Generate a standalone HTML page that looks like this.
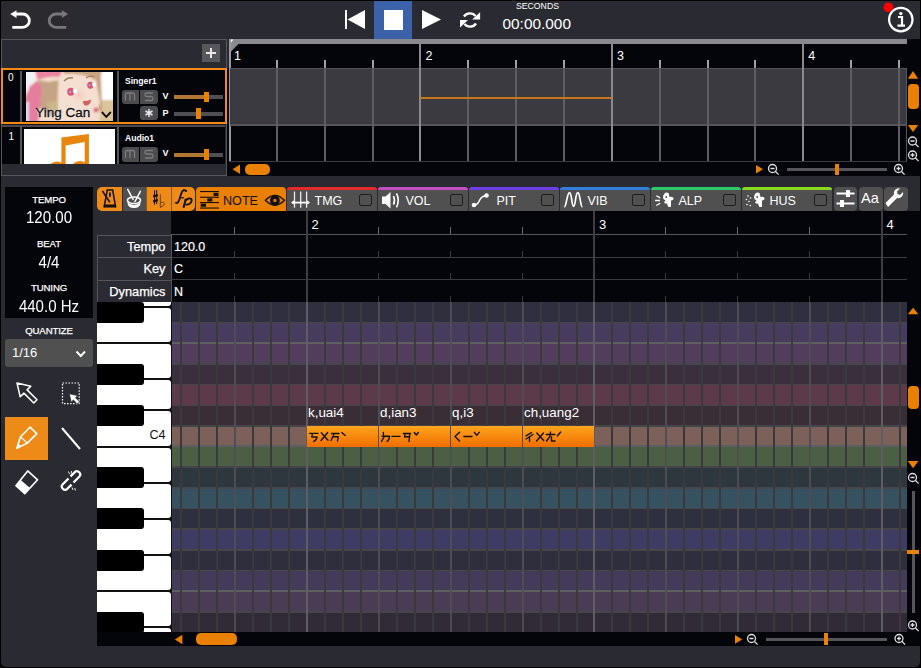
<!DOCTYPE html><html><head><meta charset="utf-8"><style>
html,body{margin:0;padding:0;background:#000;width:921px;height:668px;overflow:hidden}
body{position:relative;font-family:"Liberation Sans",sans-serif}
div{position:absolute;box-sizing:border-box}
.t{white-space:nowrap;line-height:1}
svg{position:absolute;overflow:visible}
</style></head><body>
<div style="left:1px;top:1px;width:919px;height:666px;background:#2a2a32;border-radius:0 0 5px 5px"></div>
<div style="left:1px;top:1px;width:76px;height:38px;background:#2b2b2f;"></div>
<svg style="left:0;top:0" width="100" height="40"><path d="M10.2 14 L16.5 10.3 L16.5 17.9 Z" fill="#fff"/><path d="M15 14 H22.7 A6.65 6.65 0 0 1 22.7 27.3 H12.3" fill="none" stroke="#fff" stroke-width="2.8"/><path d="M68.2 14 L61.9 10.3 L61.9 17.9 Z" fill="#77777c"/><path d="M63.4 14 H55.9 A6.65 6.65 0 0 0 55.9 27.3 H66.2" fill="none" stroke="#77777c" stroke-width="2.8"/></svg>
<div style="left:374px;top:1px;width:38px;height:38px;background:#3b62a8;"></div>
<div style="left:384px;top:10px;width:19px;height:20px;background:#fff;"></div>
<div style="left:345px;top:10px;width:2px;height:19px;background:#fff;"></div>
<svg style="left:0;top:0" width="921" height="40"><path d="M365 10 L347.5 19.5 L365 29 Z" fill="#fff"/><path d="M422 10 L441 19.5 L422 29 Z" fill="#fff"/><g fill="none" stroke="#fff" stroke-width="2.4"><path d="M464 16.5 A7.2 7.2 0 0 1 475.5 16"/><path d="M476 23.5 A7.2 7.2 0 0 1 464.5 24"/></g><path d="M480.1 12.3 L480.1 19.6 L472.2 19.6 Z" fill="#fff"/><path d="M460 27.4 L460 20 L468 20 Z" fill="#fff"/><circle cx="888.4" cy="7.3" r="4.9" fill="#f00"/><circle cx="900.8" cy="19.6" r="11.7" fill="none" stroke="#fff" stroke-width="2.2"/><circle cx="900.8" cy="13.6" r="1.7" fill="#fff"/><path d="M898 17 H902 V25 M897.5 25.6 H905" fill="none" stroke="#fff" stroke-width="2.2"/></svg>
<div class="t" style="left:516px;top:2px;font-size:8.7px;color:#fff;font-weight:normal;">SECONDS</div>
<div class="t" style="left:502.5px;top:15.8px;font-size:15.4px;color:#fff;font-weight:normal;">00:00.000</div>
<div style="left:1px;top:39px;width:226px;height:137px;background:#2a2a32;border:1px solid #55555a"></div>
<div style="left:202px;top:44px;width:18px;height:18px;background:#58585c;"></div>
<div style="left:206px;top:52px;width:10px;height:2px;background:#e8e8e8;"></div>
<div style="left:210px;top:48px;width:2px;height:10px;background:#e8e8e8;"></div>
<div style="left:1px;top:68px;width:226px;height:56px;background:#04040b;border:2px solid #f48a12"></div>
<div class="t" style="left:8px;top:73.3px;font-size:10px;color:#fff;font-weight:normal;">0</div>
<div style="left:20px;top:71px;width:2px;height:51px;background:#55555a;"></div>
<div style="left:117px;top:71px;width:2px;height:51px;background:#55555a;"></div>
<div style="left:26px;top:72px;width:87px;height:49px;overflow:hidden;background:#f4ddcc"><svg width="87" height="49" style="left:0;top:0"><defs><filter id="bl" x="-20%" y="-20%" width="140%" height="140%"><feGaussianBlur stdDeviation="0.9"/></filter><filter id="bl2" x="-50%" y="-50%" width="200%" height="200%"><feGaussianBlur stdDeviation="2"/></filter></defs><g filter="url(#bl)"><rect x="72" y="-2" width="17" height="32" fill="#ffffff"/><rect x="74" y="28" width="15" height="23" fill="#dcc49a"/><path d="M36 -2 H76 L74 10 Q60 6 44 10 Z" fill="#c9a483"/><path d="M68 6 L75 6 L76 40 L70 36 Z" fill="#c6a07e"/><path d="M-2 -2 H9 V20 H-2 Z" fill="#f2f0f4"/><path d="M9 -2 H36 L34 5 Q22 3 12 8 Z" fill="#e8849f"/><path d="M7 12 Q12 6 22 10 L34 8 Q38 20 36 40 L26 44 Q16 40 10 30 Z" fill="#c4a485"/><path d="M4 14 L12 9 L16 16 L12 51 L-2 51 L-2 30 Z" fill="#e47e9c"/><rect x="-2" y="30" width="5" height="21" fill="#e6d6ee"/><path d="M20 30 L38 28 L38 40 L24 40 Z" fill="#cbb58a"/><path d="M33 4 Q50 -2 70 8 L74 30 Q70 49 52 51 L34 51 Q30 30 33 4 Z" fill="#f5dfd0"/></g><circle cx="53" cy="23" r="4" fill="#f7c8c0" filter="url(#bl2)"/><path d="M38 9 Q42 5 47 6" stroke="#a67e5e" stroke-width="1.4" fill="none"/><path d="M60 6 Q64 3 68 5" stroke="#a67e5e" stroke-width="1.2" fill="none"/><ellipse cx="44.8" cy="19.8" rx="3.6" ry="4" fill="#dd5576"/><ellipse cx="49" cy="19" rx="2.2" ry="2.6" fill="#fff"/><circle cx="44" cy="20" r="1.1" fill="#8ec8f8"/><ellipse cx="64.3" cy="13.2" rx="3.1" ry="3.5" fill="#dd5576"/><ellipse cx="68" cy="12.5" rx="1.8" ry="2.3" fill="#fff"/><circle cx="63.5" cy="13.2" r="0.9" fill="#8ec8f8"/><path d="M57 29 Q62 29 65 27.5 Q65 33 60 33.7 Q57 33.5 57 29 Z" fill="#d26262"/><circle cx="70" cy="38" r="2.2" fill="#d85a6a" filter="url(#bl)"/></svg></div>
<div class="t" style="left:35.3px;top:106.3px;font-size:13.5px;color:#111;font-weight:normal;text-shadow:0 0 2px #fff,0 0 1px #fff;-webkit-text-stroke:0.35px #111">Ying Can</div>
<svg style="left:0;top:0" width="230" height="180"><path d="M101.8 112 L106.3 116.8 L110.8 112" fill="none" stroke="#111" stroke-width="1.9"/></svg>
<div class="t" style="left:125px;top:76.5px;font-size:8.6px;color:#fff;font-weight:bold;">Singer1</div>
<div style="left:121.5px;top:89.5px;width:17.5px;height:14.5px;background:#4c4c4e;border-radius:3px 0 0 3px"></div>
<div style="left:140px;top:89.5px;width:18px;height:14.5px;background:#4c4c4e;border-radius:0 3px 3px 0"></div>
<svg style="left:0;top:0" width="230" height="180"><g fill="none" stroke="#7e7e82" stroke-width="1.3"><path d="M125.5 100.5 V94.5 Q125.5 93.0 127.5 93.0 H132.5 Q134.5 93.0 134.5 94.5 V100.5 M130 93.0 V100.5"/><path d="M153 93.0 H146.5 Q145 93.0 145 94.7 Q145 96.5 146.5 96.5 H151.5 Q153 96.5 153 98.5 Q153 100.5 151.5 100.5 H145"/></g></svg>
<div style="left:140px;top:106px;width:18px;height:14px;background:#4c4c4e;border-radius:3px"></div>
<svg style="left:0;top:0" width="230" height="180"><g stroke="#e8e8e8" stroke-width="1.5"><path d="M149 109 V117 M145.5 111 L152.5 115 M145.5 115 L152.5 111"/></g></svg>
<div class="t" style="left:162.5px;top:91.5px;font-size:9px;color:#fff;font-weight:bold;">V</div>
<div class="t" style="left:162.5px;top:108.5px;font-size:9px;color:#fff;font-weight:bold;">P</div>
<div style="left:174px;top:95px;width:49px;height:3.5px;background:#505054;"></div>
<div style="left:174px;top:95px;width:31px;height:3.5px;background:#b07632;"></div>
<div style="left:203.5px;top:92px;width:5px;height:10px;background:#ea8000;"></div>
<div style="left:174px;top:112px;width:49px;height:3.5px;background:#505054;"></div>
<div style="left:196px;top:108px;width:5px;height:10.5px;background:#ea8000;"></div>
<div style="left:2px;top:124px;width:223px;height:1px;background:#15151b;"></div>
<div style="left:2px;top:125px;width:223px;height:2px;background:#4a4a4e;"></div>
<div style="left:2px;top:127px;width:223px;height:37px;background:#04040b;"></div>
<div class="t" style="left:8.5px;top:131.5px;font-size:10px;color:#fff;font-weight:normal;">1</div>
<div style="left:20px;top:126px;width:2px;height:38px;background:#55555a;"></div>
<div style="left:117px;top:126px;width:2px;height:38px;background:#55555a;"></div>
<div style="left:24px;top:129px;width:91px;height:35px;background:#fff;overflow:hidden"><svg width="91" height="35" style="left:0;top:0"><path d="M37.4 8.6 L64.9 5.1 L64.9 36 L60.7 36 L60.7 12.9 L41.6 16.4 L41.6 36 L37.4 36 Z" fill="#e8850f"/><ellipse cx="33" cy="38" rx="7.5" ry="5.5" fill="#e8850f"/><ellipse cx="56" cy="37.5" rx="7.5" ry="5.5" fill="#e8850f"/></svg></div>
<div class="t" style="left:125px;top:133.5px;font-size:8.6px;color:#fff;font-weight:bold;">Audio1</div>
<div style="left:121.5px;top:147px;width:17.5px;height:14.5px;background:#4c4c4e;border-radius:3px 0 0 3px"></div>
<div style="left:140px;top:147px;width:18px;height:14.5px;background:#4c4c4e;border-radius:0 3px 3px 0"></div>
<svg style="left:0;top:0" width="230" height="180"><g fill="none" stroke="#7e7e82" stroke-width="1.3"><path d="M125.5 158 V152 Q125.5 150.5 127.5 150.5 H132.5 Q134.5 150.5 134.5 152 V158 M130 150.5 V158"/><path d="M153 150.5 H146.5 Q145 150.5 145 152.2 Q145 154 146.5 154 H151.5 Q153 154 153 156 Q153 158 151.5 158 H145"/></g></svg>
<div class="t" style="left:162.5px;top:149px;font-size:9px;color:#fff;font-weight:bold;">V</div>
<div style="left:174px;top:153px;width:49px;height:3.5px;background:#505054;"></div>
<div style="left:174px;top:153px;width:31px;height:3.5px;background:#b07632;"></div>
<div style="left:204px;top:149px;width:5px;height:11px;background:#ea8000;"></div>
<div style="left:227px;top:39px;width:693px;height:137px;background:#04040b;"></div>
<div style="left:227px;top:39px;width:2px;height:29px;background:#2a2a32;"></div>
<div style="left:229px;top:39px;width:678px;height:5px;background:#8a8a8e;"></div>
<svg style="left:0;top:0" width="921" height="180"><path d="M229 44 L238.5 44 L230.5 52 L229 52 Z" fill="#8a8a8e"/><path d="M229 39.5 L233.5 39.5 L229 45 Z" fill="#fff"/></svg>
<div style="left:229px;top:39px;width:1.5px;height:123px;background:#9a9a9e;"></div>
<div style="left:230px;top:68px;width:677px;height:56px;background:#3a3a40;"></div>
<div style="left:230px;top:68px;width:677px;height:1px;background:#505056;"></div>
<div style="left:230px;top:124px;width:677px;height:2px;background:#55555a;"></div>
<div class="t" style="left:234.0px;top:49.5px;font-size:12.5px;color:#fff;font-weight:normal;">1</div>
<div style="left:276px;top:60px;width:2px;height:8px;background:#a0a0a4;"></div>
<div style="left:276px;top:69px;width:2px;height:93px;background:#5e5e62;"></div>
<div style="left:324px;top:60px;width:2px;height:8px;background:#a0a0a4;"></div>
<div style="left:324px;top:69px;width:2px;height:93px;background:#5e5e62;"></div>
<div style="left:372px;top:60px;width:2px;height:8px;background:#a0a0a4;"></div>
<div style="left:372px;top:69px;width:2px;height:93px;background:#5e5e62;"></div>
<div style="left:419px;top:44px;width:2px;height:118px;background:#8a8a8e;"></div>
<div class="t" style="left:425.4px;top:49.5px;font-size:12.5px;color:#fff;font-weight:normal;">2</div>
<div style="left:467px;top:60px;width:2px;height:8px;background:#a0a0a4;"></div>
<div style="left:467px;top:69px;width:2px;height:93px;background:#5e5e62;"></div>
<div style="left:515px;top:60px;width:2px;height:8px;background:#a0a0a4;"></div>
<div style="left:515px;top:69px;width:2px;height:93px;background:#5e5e62;"></div>
<div style="left:563px;top:60px;width:2px;height:8px;background:#a0a0a4;"></div>
<div style="left:563px;top:69px;width:2px;height:93px;background:#5e5e62;"></div>
<div style="left:611px;top:44px;width:2px;height:118px;background:#8a8a8e;"></div>
<div class="t" style="left:616.9px;top:49.5px;font-size:12.5px;color:#fff;font-weight:normal;">3</div>
<div style="left:659px;top:60px;width:2px;height:8px;background:#a0a0a4;"></div>
<div style="left:659px;top:69px;width:2px;height:93px;background:#5e5e62;"></div>
<div style="left:707px;top:60px;width:2px;height:8px;background:#a0a0a4;"></div>
<div style="left:707px;top:69px;width:2px;height:93px;background:#5e5e62;"></div>
<div style="left:754px;top:60px;width:2px;height:8px;background:#a0a0a4;"></div>
<div style="left:754px;top:69px;width:2px;height:93px;background:#5e5e62;"></div>
<div style="left:802px;top:44px;width:2px;height:118px;background:#8a8a8e;"></div>
<div class="t" style="left:808.3px;top:49.5px;font-size:12.5px;color:#fff;font-weight:normal;">4</div>
<div style="left:850px;top:60px;width:2px;height:8px;background:#a0a0a4;"></div>
<div style="left:850px;top:69px;width:2px;height:93px;background:#5e5e62;"></div>
<div style="left:898px;top:60px;width:2px;height:8px;background:#a0a0a4;"></div>
<div style="left:898px;top:69px;width:2px;height:93px;background:#5e5e62;"></div>
<div style="left:420px;top:97px;width:191px;height:1.5px;background:#c8761a;"></div>
<div style="left:906px;top:68px;width:1px;height:94px;background:#55555a;"></div>
<div style="left:227px;top:162px;width:693px;height:14px;background:#04040b;"></div>
<div style="left:229px;top:161px;width:678px;height:1px;background:#3a3a40;"></div>
<svg style="left:0;top:0" width="921" height="180"><path d="M240 164.5 L232.5 169.3 L240 174 Z" fill="#ea8000"/><path d="M756 165 L763 169.2 L756 173.4 Z" fill="#ea8000"/><path d="M918.2 78.7 L913 71 L907.8 78.7 Z" fill="#ea8000"/><path d="M907.8 125 L913 132 L918.2 125 Z" fill="#ea8000"/><g fill="none" stroke="#e0e0e0" stroke-width="1.3"><circle cx="772.5" cy="168.5" r="4"/><path d="M775.3 171.3 L778.6 174.6 M770.5 168.5 H774.5"/><circle cx="898.5" cy="168.5" r="4"/><path d="M901.3 171.3 L904.6 174.6 M896.5 168.5 H900.5 M898.5 166.5 V170.5"/><circle cx="912.5" cy="141" r="4"/><path d="M915.3 143.8 L918.6 147.1 M910.5 141 H914.5"/><circle cx="912.5" cy="155" r="4"/><path d="M915.3 157.8 L918.6 161.1 M910.5 155 H914.5 M912.5 153 V157"/></g></svg>
<div style="left:245px;top:163.5px;width:25px;height:11px;background:#ea8000;border-radius:5px"></div>
<div style="left:907.5px;top:84px;width:11px;height:25px;background:#ea8000;border-radius:4px"></div>
<div style="left:787px;top:168px;width:100px;height:3px;background:#55555a;"></div>
<div style="left:835px;top:163.5px;width:4px;height:11px;background:#ea8000;"></div>
<div style="left:5px;top:186.5px;width:88px;height:131.5px;background:#04040b;"></div>
<div class="t" style="left:0px;top:194.5px;font-size:9.6px;color:#fff;font-weight:normal;width:98px;text-align:center;-webkit-text-stroke:0.25px #fff;letter-spacing:-0.1px">TEMPO</div>
<div class="t" style="left:0px;top:210px;font-size:16px;color:#fff;font-weight:normal;width:98px;text-align:center;transform:scaleX(0.94)">120.00</div>
<div class="t" style="left:0px;top:238.6px;font-size:9.6px;color:#fff;font-weight:normal;width:98px;text-align:center;-webkit-text-stroke:0.25px #fff;letter-spacing:-0.1px">BEAT</div>
<div class="t" style="left:0px;top:254.5px;font-size:16px;color:#fff;font-weight:normal;width:98px;text-align:center;transform:scaleX(0.94)">4/4</div>
<div class="t" style="left:0px;top:282.7px;font-size:9.6px;color:#fff;font-weight:normal;width:98px;text-align:center;-webkit-text-stroke:0.25px #fff;letter-spacing:-0.1px">TUNING</div>
<div class="t" style="left:0px;top:298.5px;font-size:16px;color:#fff;font-weight:normal;width:98px;text-align:center;transform:scaleX(0.94)">440.0 Hz</div>
<div class="t" style="left:0px;top:326px;font-size:9.6px;color:#fff;font-weight:normal;width:98px;text-align:center;-webkit-text-stroke:0.25px #fff;letter-spacing:-0.1px">QUANTIZE</div>
<div style="left:5px;top:339px;width:88px;height:28px;background:#505050;border-radius:3px"></div>
<div class="t" style="left:12px;top:346px;font-size:13px;color:#fff;font-weight:normal;">1/16</div>
<svg style="left:0;top:0" width="100" height="520"><path d="M76.5 351.5 L80.8 356 L85 351.5" fill="none" stroke="#fff" stroke-width="1.9"/></svg>
<div style="left:5px;top:416.5px;width:43px;height:43px;background:#ee8a18;"></div>
<svg style="left:0;top:0" width="100" height="520"><g fill="none" stroke="#fff" stroke-width="1.5" stroke-linejoin="round"><path d="M17 383 L30.8 386.2 L27.1 389.9 L37 399.8 L33.8 403 L23.9 393.1 L20.2 396.8 Z"/><rect x="62.5" y="383" width="16.7" height="20.6" stroke-dasharray="1.5 1.5" stroke-width="1.2"/><path d="M62 428 L80 449" stroke-width="2"/></g><path d="M69.3 393.8 L77.8 395.6 L75.6 397.8 L79.6 401.8 L77.4 404 L73.4 400 L71.2 402.2 Z" fill="#fff" stroke="#2a2a32" stroke-width="0.8"/><path d="M30 427.2 L36.8 433.6 L27.3 443.1 L16.8 448.3 L20.5 436.7 Z" fill="none" stroke="#fff" stroke-width="1.6" stroke-linejoin="round"/><path d="M20.5 436.7 L27.3 443.1" stroke="#fff" stroke-width="1.3"/><path d="M16.8 448.3 L18.3 443.5 L21.6 446.6 Z" fill="#fff"/><path d="M27.7 470.9 L37.6 479.8 L24.8 493.6 L15.9 485.7 Z" fill="none" stroke="#fff" stroke-width="1.6" stroke-linejoin="round"/><path d="M15.9 485.7 L21 480.2 L30 488 L24.8 493.6 Z" fill="#fff"/><g fill="none" stroke="#fff" stroke-width="2.3"><path d="M68.5 478.5 L62.8 484.2 Q60.5 486.5 62.8 488.8 Q65 491 67.3 488.8 L71.5 484.6"/><path d="M73.5 482.5 L79.2 476.8 Q81.5 474.5 79.2 472.2 Q77 470 74.7 472.2 L70.5 476.4"/></g><g stroke="#fff" stroke-width="0.9"><path d="M68.5 471.5 L69.5 474 M71.5 471 L71.3 473.5 M73 490 L72 487.5 M75.5 490.5 L74.7 488"/></g></svg>
<div style="left:97px;top:186.5px;width:24.5px;height:24.5px;background:#ee8a18;border-radius:5px 0 0 5px"></div>
<div style="left:123px;top:186.5px;width:22.7px;height:24.5px;background:#505050;"></div>
<div style="left:147px;top:186.5px;width:23.8px;height:24.5px;background:#ee8a18;"></div>
<div style="left:172px;top:186.5px;width:23px;height:24.5px;background:#ee8a18;border-radius:0 5px 5px 0"></div>
<div style="left:196px;top:186.5px;width:90px;height:24.5px;background:#ea8000;border-radius:4px 4px 0 0"></div>
<div style="left:287px;top:186.5px;width:89.7px;height:24.5px;background:#505050;border-radius:4px 4px 0 0"></div>
<div style="left:287px;top:186.5px;width:89.7px;height:3.3px;background:#e42a2a;border-radius:4px 4px 0 0"></div>
<div class="t" style="left:314.5px;top:195px;font-size:12.5px;color:#fff;font-weight:normal;">TMG</div>
<div style="left:359.3px;top:193.7px;width:12.4px;height:12.2px;background:#505050;border:1.7px solid #1e1e1e;border-radius:2px"></div>
<div style="left:378px;top:186.5px;width:89.7px;height:24.5px;background:#505050;border-radius:4px 4px 0 0"></div>
<div style="left:378px;top:186.5px;width:89.7px;height:3.3px;background:#c44cc4;border-radius:4px 4px 0 0"></div>
<div class="t" style="left:405.5px;top:195px;font-size:12.5px;color:#fff;font-weight:normal;">VOL</div>
<div style="left:450.3px;top:193.7px;width:12.4px;height:12.2px;background:#505050;border:1.7px solid #1e1e1e;border-radius:2px"></div>
<div style="left:469px;top:186.5px;width:89.7px;height:24.5px;background:#505050;border-radius:4px 4px 0 0"></div>
<div style="left:469px;top:186.5px;width:89.7px;height:3.3px;background:#6d3de6;border-radius:4px 4px 0 0"></div>
<div class="t" style="left:496.5px;top:195px;font-size:12.5px;color:#fff;font-weight:normal;">PIT</div>
<div style="left:541.3px;top:193.7px;width:12.4px;height:12.2px;background:#505050;border:1.7px solid #1e1e1e;border-radius:2px"></div>
<div style="left:560px;top:186.5px;width:89.7px;height:24.5px;background:#505050;border-radius:4px 4px 0 0"></div>
<div style="left:560px;top:186.5px;width:89.7px;height:3.3px;background:#2f80da;border-radius:4px 4px 0 0"></div>
<div class="t" style="left:587.5px;top:195px;font-size:12.5px;color:#fff;font-weight:normal;">VIB</div>
<div style="left:632.3px;top:193.7px;width:12.4px;height:12.2px;background:#505050;border:1.7px solid #1e1e1e;border-radius:2px"></div>
<div style="left:651px;top:186.5px;width:89.7px;height:24.5px;background:#505050;border-radius:4px 4px 0 0"></div>
<div style="left:651px;top:186.5px;width:89.7px;height:3.3px;background:#2dc86c;border-radius:4px 4px 0 0"></div>
<div class="t" style="left:678.5px;top:195px;font-size:12.5px;color:#fff;font-weight:normal;">ALP</div>
<div style="left:723.3px;top:193.7px;width:12.4px;height:12.2px;background:#505050;border:1.7px solid #1e1e1e;border-radius:2px"></div>
<div style="left:742px;top:186.5px;width:89.7px;height:24.5px;background:#505050;border-radius:4px 4px 0 0"></div>
<div style="left:742px;top:186.5px;width:89.7px;height:3.3px;background:#8ad81e;border-radius:4px 4px 0 0"></div>
<div class="t" style="left:769.5px;top:195px;font-size:12.5px;color:#fff;font-weight:normal;">HUS</div>
<div style="left:814.3px;top:193.7px;width:12.4px;height:12.2px;background:#505050;border:1.7px solid #1e1e1e;border-radius:2px"></div>
<div style="left:833.5px;top:186.5px;width:23.5px;height:24px;background:#505050;border-radius:4px"></div>
<div style="left:859px;top:186.5px;width:23.5px;height:24px;background:#505050;border-radius:4px"></div>
<div style="left:884px;top:186.5px;width:23.5px;height:24px;background:#505050;border-radius:4px"></div>
<div class="t" style="left:223px;top:194.8px;font-size:12.6px;color:#111;font-weight:normal;">NOTE</div>
<div class="t" style="left:861px;top:190.8px;font-size:14.6px;color:#fff;font-weight:normal;">Aa</div>
<svg style="left:0;top:0" width="921" height="240"><path d="M104 207.5 L107.3 190 L112.7 190 L115.7 207.5" fill="none" stroke="#111" stroke-width="1.5"/><path d="M104.5 204.5 H115.5 V207.5 H104 Z" fill="#111"/><path d="M102.4 190.9 L109.8 202.3" stroke="#111" stroke-width="1.6"/><rect x="109" y="192.5" width="1.8" height="4.4" fill="#111"/><ellipse cx="134" cy="200.3" rx="6.6" ry="3.2" fill="none" stroke="#fff" stroke-width="1.5"/><path d="M127.4 202 Q127.5 208 134 208 Q140.5 208 140.6 202 Q138 205 134 205 Q130 205 127.4 202 Z" fill="#fff"/><path d="M127.7 189.3 L133.1 199.3 M140.4 191.4 L135 201.5" stroke="#fff" stroke-width="1.5" stroke-linecap="round"/><g fill="#111"><rect x="200" y="191" width="19" height="1.1"/><rect x="200" y="196.7" width="19" height="1.1"/><rect x="200" y="202" width="19" height="1.1"/><rect x="200" y="207.5" width="19" height="1.1"/><rect x="213.5" y="192.8" width="5" height="3.2"/><rect x="207.3" y="198.3" width="5" height="3.2"/><rect x="200.7" y="203.6" width="5.3" height="3.2"/></g><path d="M265.4 200.3 Q275 190.5 284.4 200.3 Q275 210.1 265.4 200.3 Z" fill="none" stroke="#111" stroke-width="1.4"/><circle cx="274.9" cy="200.5" r="3.3" fill="none" stroke="#111" stroke-width="3.2"/><g stroke="#e8e8e8" stroke-width="1.3"><path d="M294.5 191.5 V207.8 M300.7 191.5 V207.8 M306.6 191.5 V207.8"/></g><path d="M292 202.6 H309" stroke="#fff" stroke-width="1.8"/><path d="M291 202.6 L294 200.6 V204.6 Z M310 202.6 L307 200.6 V204.6 Z" fill="#fff"/><path d="M382 196.5 H385.5 L390.5 192 V208.5 L385.5 204 H382 Z" fill="#fff"/><path d="M393.5 196 Q395.5 200.3 393.5 204.6 M396.5 193.3 Q400 200.3 396.5 207.3" fill="none" stroke="#fff" stroke-width="1.6"/><path d="M474.5 205 Q477.5 205 479.5 200.5 Q481.5 196 485.5 196" fill="none" stroke="#fff" stroke-width="1.5"/><circle cx="474" cy="205" r="2.3" fill="#fff"/><circle cx="486.5" cy="195.5" r="2.3" fill="#fff"/><path d="M564.3 206.8 C566.5 206.8 567 192.6 569.5 192.6 C572 192.6 571.5 206.4 573.6 206.4 C575.7 206.4 575.3 192.6 577.8 192.6 C580.3 192.6 580.2 206.8 582.4 206.8" fill="none" stroke="#fff" stroke-width="1.7"/><path d="M656.3 195.7 L660.2 197.9 M655.1 200.5 H660 M656.3 205.5 L660.2 203.3" stroke="#fff" stroke-width="1.3"/><path transform="translate(0,0)" d="M664.5 193.5 Q666 191.8 668.5 193 L669.5 197 Q672 196 673.5 198 Q673.8 200.3 671 200.5 L671 206.5 Q669.5 207.5 668 206.5 L667 203.5 Q665 204 664 202.5 L665.5 200.5 Q663 199.5 663 197.5 Q663 195 664.5 193.5 Z" fill="#fff"/><circle cx="666.2" cy="197" r="0.9" fill="#505050"/><g fill="#fff"><circle cx="748" cy="196" r="0.8"/><circle cx="746.5" cy="199.5" r="0.8"/><circle cx="749" cy="201.5" r="0.8"/><circle cx="747" cy="204.5" r="0.8"/><circle cx="750.5" cy="198" r="0.8"/><circle cx="750.3" cy="205.5" r="0.8"/></g><path transform="translate(91,0)" d="M664.5 193.5 Q666 191.8 668.5 193 L669.5 197 Q672 196 673.5 198 Q673.8 200.3 671 200.5 L671 206.5 Q669.5 207.5 668 206.5 L667 203.5 Q665 204 664 202.5 L665.5 200.5 Q663 199.5 663 197.5 Q663 195 664.5 193.5 Z" fill="#fff"/><circle cx="757.2" cy="197" r="0.9" fill="#505050"/><g stroke="#fff" stroke-width="2"><path d="M836.5 193.5 H854.5 M836.5 203.5 H854.5"/></g><rect x="846" y="190" width="4" height="7" fill="#fff"/><rect x="840" y="200" width="4" height="7" fill="#fff"/><path d="M888 207 L897 198 A5 5 0 0 0 903 192 L900 195 L897.5 194 L897 191.5 L900 188.5 A5 5 0 0 0 894 194.5 L885.5 203 Z" fill="#fff"/></svg>
<svg style="left:0;top:0" width="921" height="240"><g stroke="#111" fill="none"><path d="M154.5 190.3 V204.7 M156.7 190 V204" stroke-width="1"/><path d="M153.1 196.5 L157.9 195 M153.1 201.5 L157.9 200" stroke-width="2"/><path d="M160.3 194.2 V207.5 Q164.8 205.5 164.6 203.3 Q164.3 201.5 160.3 202.5" stroke-width="0.9" stroke="#5a3a10"/><path d="M186.3 191.3 Q185.5 189.7 183.8 190.2 Q181.8 191 180.5 196 Q179 201.5 177.5 202.8 Q176 203.6 175.5 202.3" stroke-width="1.8"/><path d="M179 197.8 H184" stroke-width="1.1"/><path d="M185.8 198.7 L183.5 207.8" stroke-width="2"/><path d="M185.6 200.5 Q188.5 197.5 191 198.7 Q192.5 200 190.8 202.8 Q189 205.2 185.4 204.3" stroke-width="1.8"/></g><circle cx="186" cy="191" r="1.1" fill="#111"/></svg>
<div style="left:170.5px;top:186.5px;width:1px;height:24.5px;background:#8a5a1c;"></div>
<div style="left:146px;top:186.5px;width:1px;height:24.5px;background:#8a5a1c;"></div>
<div style="left:171px;top:211px;width:736px;height:91.5px;background:#04040b;"></div>
<div style="left:171px;top:233.5px;width:736px;height:1px;background:#55555a;"></div>
<div style="left:97px;top:234.5px;width:74.5px;height:23.5px;background:#2a2a32;border:1px solid #55555a"></div>
<div style="left:171px;top:256.7px;width:736px;height:1px;background:#3c3c40;"></div>
<div class="t" style="left:96.5px;top:240.7px;font-size:12.8px;color:#fff;font-weight:normal;width:69px;text-align:right;-webkit-text-stroke:0.25px #fff">Tempo</div>
<div class="t" style="left:174px;top:240.7px;font-size:12.5px;color:#fff;font-weight:normal;-webkit-text-stroke:0.2px #fff">120.0</div>
<div style="left:97px;top:257.2px;width:74.5px;height:23.5px;background:#2a2a32;border:1px solid #55555a"></div>
<div style="left:171px;top:279.4px;width:736px;height:1px;background:#3c3c40;"></div>
<div class="t" style="left:96.5px;top:263.4px;font-size:12.8px;color:#fff;font-weight:normal;width:69px;text-align:right;-webkit-text-stroke:0.25px #fff">Key</div>
<div class="t" style="left:174px;top:263.4px;font-size:12.5px;color:#fff;font-weight:normal;-webkit-text-stroke:0.2px #fff">C</div>
<div style="left:97px;top:279.9px;width:74.5px;height:23.5px;background:#2a2a32;border:1px solid #55555a"></div>
<div style="left:171px;top:302.1px;width:736px;height:1px;background:#3c3c40;"></div>
<div class="t" style="left:96.5px;top:286.09999999999997px;font-size:12.8px;color:#fff;font-weight:normal;width:69px;text-align:right;-webkit-text-stroke:0.25px #fff">Dynamics</div>
<div class="t" style="left:174px;top:286.09999999999997px;font-size:12.5px;color:#fff;font-weight:normal;-webkit-text-stroke:0.2px #fff">N</div>
<div style="left:171.3px;top:301.7px;width:735.7px;height:21.16px;background:#302f40;"></div>
<div style="left:171.3px;top:322.36px;width:735.7px;height:21.16px;background:#483c5e;"></div>
<div style="left:171.3px;top:321.86px;width:735.7px;height:1.5px;background:#45454a;"></div>
<div style="left:171.3px;top:343.02px;width:735.7px;height:21.16px;background:#523e5c;"></div>
<div style="left:171.3px;top:342.02px;width:735.7px;height:2px;background:#5f5f62;"></div>
<div style="left:171.3px;top:363.68px;width:735.7px;height:21.16px;background:#3a303d;"></div>
<div style="left:171.3px;top:363.18px;width:735.7px;height:1.5px;background:#45454a;"></div>
<div style="left:171.3px;top:384.34px;width:735.7px;height:21.16px;background:#5c3a4a;"></div>
<div style="left:171.3px;top:383.84px;width:735.7px;height:1.5px;background:#45454a;"></div>
<div style="left:171.3px;top:405.0px;width:735.7px;height:21.16px;background:#3a2e36;"></div>
<div style="left:171.3px;top:404.5px;width:735.7px;height:1.5px;background:#45454a;"></div>
<div style="left:171.3px;top:425.66px;width:735.7px;height:21.16px;background:#7c605a;"></div>
<div style="left:171.3px;top:425.16px;width:735.7px;height:1.5px;background:#45454a;"></div>
<div style="left:171.3px;top:446.32px;width:735.7px;height:21.16px;background:#4c5e44;"></div>
<div style="left:171.3px;top:445.32px;width:735.7px;height:2px;background:#5f5f62;"></div>
<div style="left:171.3px;top:466.98px;width:735.7px;height:21.16px;background:#2e363e;"></div>
<div style="left:171.3px;top:466.48px;width:735.7px;height:1.5px;background:#45454a;"></div>
<div style="left:171.3px;top:487.64px;width:735.7px;height:21.16px;background:#365260;"></div>
<div style="left:171.3px;top:487.14px;width:735.7px;height:1.5px;background:#45454a;"></div>
<div style="left:171.3px;top:508.3px;width:735.7px;height:21.16px;background:#2e3040;"></div>
<div style="left:171.3px;top:507.8px;width:735.7px;height:1.5px;background:#45454a;"></div>
<div style="left:171.3px;top:528.96px;width:735.7px;height:21.16px;background:#3e3c62;"></div>
<div style="left:171.3px;top:528.46px;width:735.7px;height:1.5px;background:#45454a;"></div>
<div style="left:171.3px;top:549.62px;width:735.7px;height:21.16px;background:#2e2e3c;"></div>
<div style="left:171.3px;top:549.12px;width:735.7px;height:1.5px;background:#45454a;"></div>
<div style="left:171.3px;top:570.28px;width:735.7px;height:21.16px;background:#443a5a;"></div>
<div style="left:171.3px;top:569.78px;width:735.7px;height:1.5px;background:#45454a;"></div>
<div style="left:171.3px;top:590.94px;width:735.7px;height:21.16px;background:#4a3c54;"></div>
<div style="left:171.3px;top:589.94px;width:735.7px;height:2px;background:#5f5f62;"></div>
<div style="left:171.3px;top:611.6px;width:735.7px;height:21.16px;background:#312b37;"></div>
<div style="left:171.3px;top:611.1px;width:735.7px;height:1.5px;background:#45454a;"></div>
<div style="left:180px;top:302px;width:2px;height:330px;background:#3a3a3c;"></div>
<div style="left:198px;top:302px;width:2px;height:330px;background:#3a3a3c;"></div>
<div style="left:216px;top:302px;width:2px;height:330px;background:#3a3a3c;"></div>
<div style="left:234px;top:302px;width:2px;height:330px;background:rgba(78,78,82,0.95);"></div>
<div style="left:234px;top:227px;width:1px;height:7px;background:#6a6a6e;"></div>
<div style="left:234px;top:250.5px;width:1px;height:6px;background:rgba(110,110,110,0.5);"></div>
<div style="left:234px;top:273.2px;width:1px;height:6px;background:rgba(110,110,110,0.5);"></div>
<div style="left:234px;top:295.9px;width:1px;height:6px;background:rgba(110,110,110,0.5);"></div>
<div style="left:252px;top:302px;width:2px;height:330px;background:#3a3a3c;"></div>
<div style="left:270px;top:302px;width:2px;height:330px;background:#3a3a3c;"></div>
<div style="left:288px;top:302px;width:2px;height:330px;background:#3a3a3c;"></div>
<div style="left:306px;top:211px;width:2px;height:91px;background:#3e3e42;"></div>
<div style="left:306px;top:302px;width:2px;height:330px;background:#5e5e62;"></div>
<div style="left:324px;top:302px;width:2px;height:330px;background:#3a3a3c;"></div>
<div style="left:342px;top:302px;width:2px;height:330px;background:#3a3a3c;"></div>
<div style="left:360px;top:302px;width:2px;height:330px;background:#3a3a3c;"></div>
<div style="left:378px;top:302px;width:2px;height:330px;background:rgba(78,78,82,0.95);"></div>
<div style="left:378px;top:227px;width:1px;height:7px;background:#6a6a6e;"></div>
<div style="left:378px;top:250.5px;width:1px;height:6px;background:rgba(110,110,110,0.5);"></div>
<div style="left:378px;top:273.2px;width:1px;height:6px;background:rgba(110,110,110,0.5);"></div>
<div style="left:378px;top:295.9px;width:1px;height:6px;background:rgba(110,110,110,0.5);"></div>
<div style="left:396px;top:302px;width:2px;height:330px;background:#3a3a3c;"></div>
<div style="left:414px;top:302px;width:2px;height:330px;background:#3a3a3c;"></div>
<div style="left:432px;top:302px;width:2px;height:330px;background:#3a3a3c;"></div>
<div style="left:450px;top:302px;width:2px;height:330px;background:rgba(78,78,82,0.95);"></div>
<div style="left:450px;top:227px;width:1px;height:7px;background:#6a6a6e;"></div>
<div style="left:450px;top:250.5px;width:1px;height:6px;background:rgba(110,110,110,0.5);"></div>
<div style="left:450px;top:273.2px;width:1px;height:6px;background:rgba(110,110,110,0.5);"></div>
<div style="left:450px;top:295.9px;width:1px;height:6px;background:rgba(110,110,110,0.5);"></div>
<div style="left:468px;top:302px;width:2px;height:330px;background:#3a3a3c;"></div>
<div style="left:486px;top:302px;width:2px;height:330px;background:#3a3a3c;"></div>
<div style="left:504px;top:302px;width:2px;height:330px;background:#3a3a3c;"></div>
<div style="left:522px;top:302px;width:2px;height:330px;background:rgba(78,78,82,0.95);"></div>
<div style="left:522px;top:227px;width:1px;height:7px;background:#6a6a6e;"></div>
<div style="left:522px;top:250.5px;width:1px;height:6px;background:rgba(110,110,110,0.5);"></div>
<div style="left:522px;top:273.2px;width:1px;height:6px;background:rgba(110,110,110,0.5);"></div>
<div style="left:522px;top:295.9px;width:1px;height:6px;background:rgba(110,110,110,0.5);"></div>
<div style="left:540px;top:302px;width:2px;height:330px;background:#3a3a3c;"></div>
<div style="left:558px;top:302px;width:2px;height:330px;background:#3a3a3c;"></div>
<div style="left:576px;top:302px;width:2px;height:330px;background:#3a3a3c;"></div>
<div style="left:593px;top:211px;width:2px;height:91px;background:#3e3e42;"></div>
<div style="left:593px;top:302px;width:2px;height:330px;background:#5e5e62;"></div>
<div style="left:611px;top:302px;width:2px;height:330px;background:#3a3a3c;"></div>
<div style="left:629px;top:302px;width:2px;height:330px;background:#3a3a3c;"></div>
<div style="left:647px;top:302px;width:2px;height:330px;background:#3a3a3c;"></div>
<div style="left:665px;top:302px;width:2px;height:330px;background:rgba(78,78,82,0.95);"></div>
<div style="left:665px;top:227px;width:1px;height:7px;background:#6a6a6e;"></div>
<div style="left:665px;top:250.5px;width:1px;height:6px;background:rgba(110,110,110,0.5);"></div>
<div style="left:665px;top:273.2px;width:1px;height:6px;background:rgba(110,110,110,0.5);"></div>
<div style="left:665px;top:295.9px;width:1px;height:6px;background:rgba(110,110,110,0.5);"></div>
<div style="left:683px;top:302px;width:2px;height:330px;background:#3a3a3c;"></div>
<div style="left:701px;top:302px;width:2px;height:330px;background:#3a3a3c;"></div>
<div style="left:719px;top:302px;width:2px;height:330px;background:#3a3a3c;"></div>
<div style="left:737px;top:302px;width:2px;height:330px;background:rgba(78,78,82,0.95);"></div>
<div style="left:737px;top:227px;width:1px;height:7px;background:#6a6a6e;"></div>
<div style="left:737px;top:250.5px;width:1px;height:6px;background:rgba(110,110,110,0.5);"></div>
<div style="left:737px;top:273.2px;width:1px;height:6px;background:rgba(110,110,110,0.5);"></div>
<div style="left:737px;top:295.9px;width:1px;height:6px;background:rgba(110,110,110,0.5);"></div>
<div style="left:755px;top:302px;width:2px;height:330px;background:#3a3a3c;"></div>
<div style="left:773px;top:302px;width:2px;height:330px;background:#3a3a3c;"></div>
<div style="left:791px;top:302px;width:2px;height:330px;background:#3a3a3c;"></div>
<div style="left:809px;top:302px;width:2px;height:330px;background:rgba(78,78,82,0.95);"></div>
<div style="left:809px;top:227px;width:1px;height:7px;background:#6a6a6e;"></div>
<div style="left:809px;top:250.5px;width:1px;height:6px;background:rgba(110,110,110,0.5);"></div>
<div style="left:809px;top:273.2px;width:1px;height:6px;background:rgba(110,110,110,0.5);"></div>
<div style="left:809px;top:295.9px;width:1px;height:6px;background:rgba(110,110,110,0.5);"></div>
<div style="left:827px;top:302px;width:2px;height:330px;background:#3a3a3c;"></div>
<div style="left:845px;top:302px;width:2px;height:330px;background:#3a3a3c;"></div>
<div style="left:863px;top:302px;width:2px;height:330px;background:#3a3a3c;"></div>
<div style="left:881px;top:211px;width:2px;height:91px;background:#3e3e42;"></div>
<div style="left:881px;top:302px;width:2px;height:330px;background:#5e5e62;"></div>
<div style="left:899px;top:302px;width:2px;height:330px;background:#3a3a3c;"></div>
<div class="t" style="left:311.6px;top:218px;font-size:13px;color:#fff;font-weight:normal;">2</div>
<div class="t" style="left:599.0px;top:218px;font-size:13px;color:#fff;font-weight:normal;">3</div>
<div class="t" style="left:886.4px;top:218px;font-size:13px;color:#fff;font-weight:normal;">4</div>
<div style="left:96.5px;top:302px;width:75px;height:330px;overflow:hidden;background:#111">
<div style="left:0;top:109.47px;width:74.8px;height:34.16px;background:#fff;border-radius:0 3px 3px 0"></div>
<div style="left:0;top:78.47px;width:74.8px;height:28.99px;background:#fff;border-radius:0 3px 3px 0"></div>
<div style="left:0;top:42.32px;width:74.8px;height:34.15px;background:#fff;border-radius:0 3px 3px 0"></div>
<div style="left:0;top:6.17px;width:74.8px;height:34.16px;background:#fff;border-radius:0 3px 3px 0"></div>
<div style="left:0;top:-29.99px;width:74.8px;height:34.16px;background:#fff;border-radius:0 3px 3px 0"></div>
<div style="left:0;top:-66.14px;width:74.8px;height:34.15px;background:#fff;border-radius:0 3px 3px 0"></div>
<div style="left:0;top:-102.30px;width:74.8px;height:34.16px;background:#fff;border-radius:0 3px 3px 0"></div>
<div style="left:0;top:145.62px;width:74.8px;height:34.16px;background:#fff;border-radius:0 3px 3px 0"></div>
<div style="left:0;top:181.78px;width:74.8px;height:34.16px;background:#fff;border-radius:0 3px 3px 0"></div>
<div style="left:0;top:217.93px;width:74.8px;height:34.16px;background:#fff;border-radius:0 3px 3px 0"></div>
<div style="left:0;top:254.09px;width:74.8px;height:34.16px;background:#fff;border-radius:0 3px 3px 0"></div>
<div style="left:0;top:290.24px;width:74.8px;height:34.15px;background:#fff;border-radius:0 3px 3px 0"></div>
<div style="left:0;top:326.39px;width:74.8px;height:28.99px;background:#fff;border-radius:0 3px 3px 0"></div>
<div style="left:0;top:357.38px;width:74.8px;height:34.16px;background:#fff;border-radius:0 3px 3px 0"></div>
<div style="left:0;top:-0.30px;width:47.4px;height:20.96px;background:#000;border-radius:0 3px 3px 0"></div>
<div style="left:0;top:61.68px;width:47.4px;height:20.96px;background:#000;border-radius:0 3px 3px 0"></div>
<div style="left:0;top:103.00px;width:47.4px;height:20.96px;background:#000;border-radius:0 3px 3px 0"></div>
<div style="left:0;top:164.98px;width:47.4px;height:20.96px;background:#000;border-radius:0 3px 3px 0"></div>
<div style="left:0;top:206.30px;width:47.4px;height:20.96px;background:#000;border-radius:0 3px 3px 0"></div>
<div style="left:0;top:247.62px;width:47.4px;height:20.96px;background:#000;border-radius:0 3px 3px 0"></div>
<div style="left:0;top:309.60px;width:47.4px;height:20.96px;background:#000;border-radius:0 3px 3px 0"></div>
</div>
<div class="t" style="left:149.5px;top:429px;font-size:12.6px;color:#111;font-weight:normal;">C4</div>
<div style="left:307px;top:426px;width:71px;height:20.5px;background:linear-gradient(#ffa41c,#f06e00);"></div>
<div class="t" style="left:308px;top:406px;font-size:13.4px;color:#fff;font-weight:normal;">k,uai4</div>
<div style="left:379px;top:426px;width:71px;height:20.5px;background:linear-gradient(#ffa41c,#f06e00);"></div>
<div class="t" style="left:380px;top:406px;font-size:13.4px;color:#fff;font-weight:normal;">d,ian3</div>
<div style="left:451px;top:426px;width:71px;height:20.5px;background:linear-gradient(#ffa41c,#f06e00);"></div>
<div class="t" style="left:452px;top:406px;font-size:13.4px;color:#fff;font-weight:normal;">q,i3</div>
<div style="left:523px;top:426px;width:71px;height:20.5px;background:linear-gradient(#ffa41c,#f06e00);"></div>
<div class="t" style="left:524px;top:406px;font-size:13.4px;color:#fff;font-weight:normal;">ch,uang2</div>
<svg style="left:0;top:0" width="921" height="668"><g fill="none" stroke="#111" stroke-width="1.35" stroke-linecap="round" stroke-linejoin="round"><path d="M309.6 433.4 H318 M312.5 433.6 L311.8 437 H317 Q317 440 313.5 441.5"/><path d="M321.3 432.7 L328 440.3 M327.7 432.5 L321 440.5"/><path d="M331.5 433.5 H339 M334 434 L331 440.5 M333 436.7 H338.3 L337.5 441"/><path d="M341.8 432.4 L345.2 435.4"/><path d="M383.3 432.5 L383.5 435 M382 436.2 H389.5 Q389.5 440 387 441.5 M384.3 436.5 L381.5 441.5"/><path d="M391.9 436.3 H400"/><path d="M403.3 433.5 H410.5 M404.5 436.7 H409.8 M409.8 433.5 L409 441.5 M405 434 L404.5 437"/><path d="M414.3 432.5 L416.3 435 L418.3 432.5"/><path d="M459.6 432.2 L455 436.6 L459.6 441"/><path d="M463.9 436.5 H472"/><path d="M474.4 432.3 L476.8 435.3 L479.2 432.3"/><path d="M531.5 432.7 L526 435.8 M533 434.5 L526 439 M529.5 437 V441.5"/><path d="M536.8 433 L543.7 440.5 M543.5 433 L536.5 441"/><path d="M546.3 434.5 H554.9 M550.5 432 L550 436.5 M550 436.5 L546.5 441 M551.5 437 V441 H555"/><path d="M560.7 432 L557.3 436"/></g></svg>
<div style="left:907px;top:211px;width:13px;height:421px;background:#04040b;"></div>
<div style="left:96.5px;top:632px;width:823.5px;height:14px;background:#04040b;"></div>
<svg style="left:0;top:0" width="921" height="668"><path d="M907.8 314.2 L913.1 307.7 L918.4 314.2 Z" fill="#ea8000"/><path d="M907.8 461 L913.1 468.2 L918.4 461 Z" fill="#ea8000"/><path d="M182.4 634.7 L174.8 639.5 L182.4 644.3 Z" fill="#ea8000"/><path d="M735 635 L742.2 639.4 L735 643.8 Z" fill="#ea8000"/><g fill="none" stroke="#e0e0e0" stroke-width="1.3"><circle cx="912.5" cy="477.5" r="4"/><path d="M915.3 480.3 L918.6 483.6 M910.5 477.5 H914.5"/><circle cx="912.5" cy="625" r="4"/><path d="M915.3 627.8 L918.6 631.1 M910.5 625 H914.5 M912.5 623 V627"/><circle cx="751.5" cy="638.5" r="4"/><path d="M754.3 641.3 L757.6 644.6 M749.5 638.5 H753.5"/><circle cx="899" cy="638.5" r="4"/><path d="M901.8 641.3 L905.1 644.6 M897 638.5 H901 M899 636.5 V640.5"/></g></svg>
<div style="left:907.9px;top:385.5px;width:11px;height:23.7px;background:#ea8000;border-radius:4px"></div>
<div style="left:912px;top:491px;width:3px;height:121.6px;background:#55555a;"></div>
<div style="left:907.3px;top:549.7px;width:11.7px;height:4.3px;background:#ea8000;"></div>
<div style="left:195.8px;top:633.4px;width:41.7px;height:11.8px;background:#ea8000;border-radius:5px"></div>
<div style="left:766.2px;top:637.6px;width:120.5px;height:3.7px;background:#55555a;"></div>
<div style="left:823.8px;top:632.9px;width:4.7px;height:12.5px;background:#ea8000;"></div>
</body></html>
